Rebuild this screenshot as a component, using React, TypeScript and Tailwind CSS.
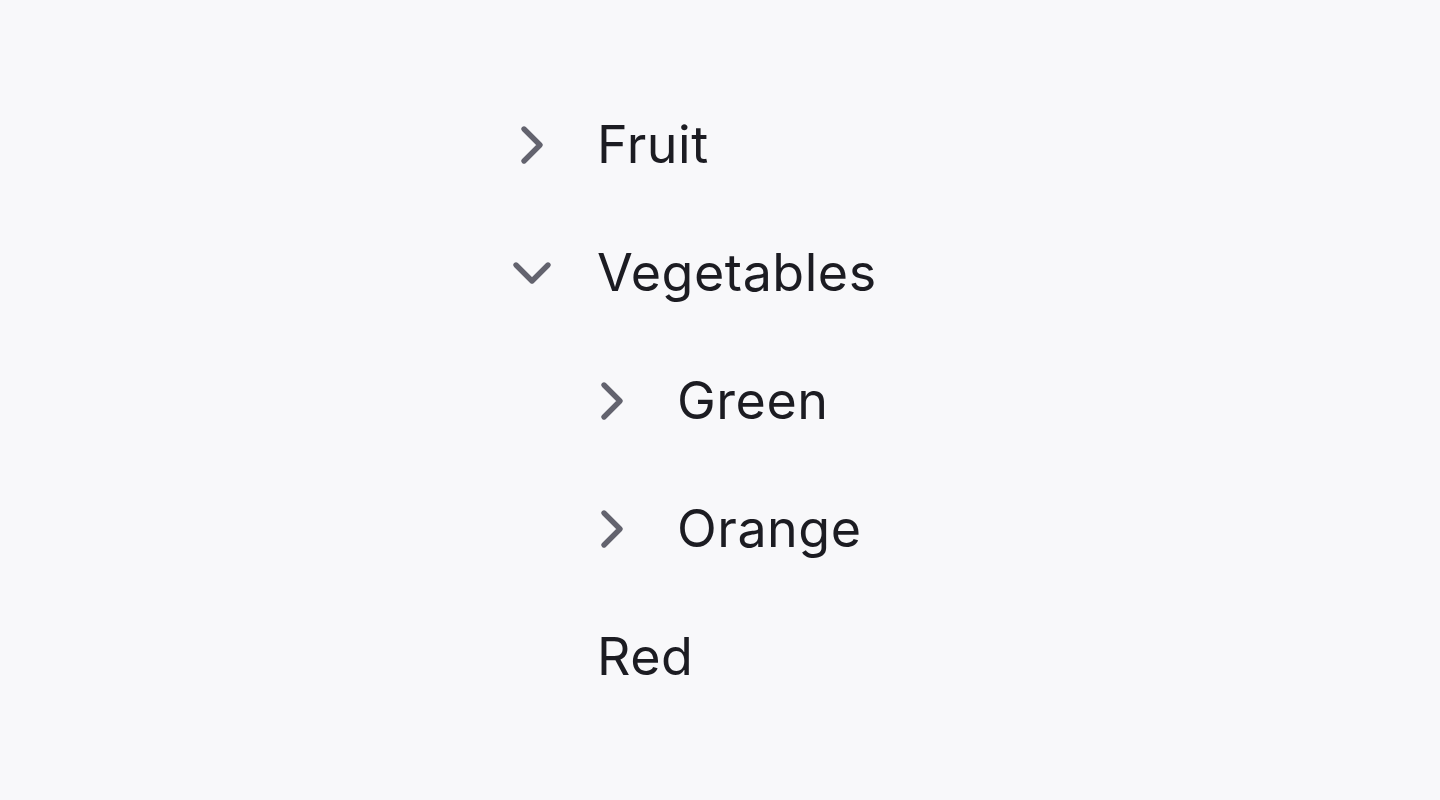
import React from 'react';
import { ChevronRight, ChevronDown } from 'lucide-react';

interface Node {
  label: string;
  level: number;
  expanded?: boolean;
  leaf?: boolean;
}

const nodes: Node[] = [
  { label: 'Fruit', level: 0 },
  { label: 'Vegetables', level: 0, expanded: true },
  { label: 'Green', level: 1 },
  { label: 'Orange', level: 1 },
  { label: 'Red', level: 1, leaf: true },
];

function TreeRow({ node }: { node: Node }) {
  return (
    <div className={`flex h-[128px] items-center ${node.level === 1 && !node.leaf ? 'pl-[80px]' : ''}`}>
      {node.leaf ? (
        <div className="w-[97px] shrink-0" />
      ) : (
        <div className="flex w-[64px] shrink-0 items-center justify-center text-[#63636e]">
          {node.expanded ? (
            <ChevronDown size={64} strokeWidth={2} />
          ) : (
            <ChevronRight size={64} strokeWidth={2} />
          )}
        </div>
      )}
      <span
        className={`${node.leaf ? '' : 'ml-[33px]'} text-[52px] leading-[64px] tracking-[0.01em] text-[#1c1c22]`}
      >
        {node.label}
      </span>
    </div>
  );
}

export default function App() {
  return (
    <div
      className="min-h-screen bg-[#f8f8fa] pt-[81px]"
      style={{ fontFamily: 'Inter, "Noto Sans", sans-serif' }}
    >
      <div className="mx-auto w-[440px]">
        {nodes.map((node) => (
          <TreeRow key={node.label} node={node} />
        ))}
      </div>
    </div>
  );
}
